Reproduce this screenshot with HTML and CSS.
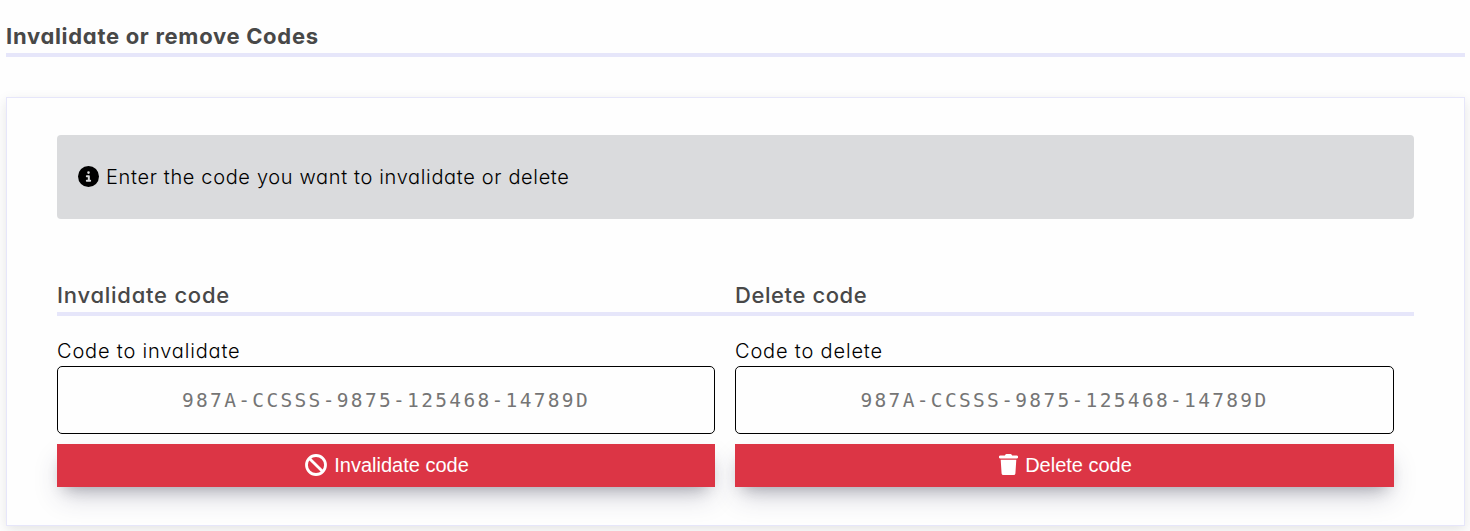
FILE: index.html
```html
<!DOCTYPE html>
<html lang="en">
<head>
<meta charset="utf-8">
<title>Invalidate or remove Codes</title>
<link rel="stylesheet" href="styles.css">
</head>
<body>
<h1 class="title">Invalidate or remove Codes</h1>
<main class="card">
  <div class="notice">
    <svg class="info" viewBox="0 0 512 512"><circle cx="256" cy="256" r="256" fill="#000"/><path fill="#dadbdd" d="M256 128a32 32 0 1 1 0 64 32 32 0 0 1 0-64zm-40 96h48c13 0 24 11 24 24v88h8c13 0 24 11 24 24s-11 24-24 24h-80c-13 0-24-11-24-24s11-24 24-24h24v-64h-24c-13 0-24-11-24-24s11-24 24-24z"/></svg>
    <span class="notice-text">Enter the code you want to invalidate or delete</span>
  </div>
  <div class="columns">
    <section class="column">
      <h2 class="subtitle"><span class="sub-a">Invalidate code</span></h2>
      <label class="label label-a" for="invalidate">Code to invalidate</label>
      <input class="code" id="invalidate" placeholder="987A-CCSSS-9875-125468-14789D">
      <button class="button"><svg class="ban" viewBox="0 0 22 22"><circle cx="11" cy="11" r="9.5"/><path d="M4.4 4.4l13.2 13.2"/></svg><span>Invalidate code</span></button>
    </section>
    <section class="column">
      <h2 class="subtitle"><span class="sub-b">Delete code</span></h2>
      <label class="label label-b" for="delete">Code to delete</label>
      <input class="code" id="delete" placeholder="987A-CCSSS-9875-125468-14789D">
      <button class="button"><svg class="trash" viewBox="0 0 19 22"><path d="M6.3.8Q6.7 0 7.5 0h4q.8 0 1.2.8l.4.7h4.6a1.3 1.3 0 0 1 0 2.9H1.3a1.3 1.3 0 0 1 0-2.9h4.6zM1.7 5.7h15.6l-.9 13.7q-.1 1.6-1.8 1.6H4.4q-1.7 0-1.8-1.6z"/></svg><span>Delete code</span></button>
    </section>
  </div>
</main>
</body>
</html>
```
FILE: styles.css
```css
* { box-sizing: border-box; }
body {
  margin: 0;
  padding: 20px 5px 0 6px;
  height: 531px;
  overflow: hidden;
  background: #fefefe;
  color: #000;
  font: 300 20px/30px Inter, "Open Sans", sans-serif;
  font-feature-settings: "cv11";
}
.title {
  margin: 0 0 40px;
  height: 37px;
  border-bottom: 4px solid #e6e6fa;
  color: #484848;
  font-size: 22px;
  font-weight: 700;
  line-height: 33px;
  letter-spacing: .7px;
}
.card {
  height: 429px;
  padding: 37px 50px 0;
  border: 1px solid #e6e6fa;
  background: #fefefe;
  box-shadow: 0 4px 12px rgba(0, 0, 0, .1);
}
.notice {
  display: flex;
  align-items: center;
  height: 84px;
  padding-left: 21px;
  border-radius: 4px;
  background: #dadbdd;
}
.notice-text { letter-spacing: .65px; }
.info { width: 21px; height: 21px; margin: -1px 7px 0 0; }
.columns {
  display: grid;
  grid-template-columns: 678px 679px;
  margin-top: 60px;
}
.column { display: flex; flex-direction: column; }
.subtitle {
  margin: 0 0 20px;
  height: 37px;
  border-bottom: 4px solid #e6e6fa;
  color: #484848;
  font-size: 22px;
  font-weight: 500;
  line-height: 32px;
}
.sub-a { letter-spacing: .76px; }
.sub-b { letter-spacing: .58px; }
.label { height: 30px; }
.label-a { letter-spacing: .82px; }
.label-b { letter-spacing: .83px; }
.code {
  width: calc(100% - 20px);
  height: 68px;
  padding: 0 20px;
  border: 1px solid #000;
  border-radius: 5px;
  background: transparent;
  font: 19.5px "DejaVu Sans Mono", monospace;
  letter-spacing: 2.33px;
  text-align: center;
}
.code::placeholder { color: #757575; opacity: 1; }
.button {
  display: flex;
  align-items: center;
  justify-content: center;
  gap: 7px;
  width: calc(100% - 20px);
  height: 43px;
  margin-top: 10px;
  padding: 0 0 0 2px;
  border: 0;
  background: #dc3545;
  color: #fff;
  font: 20px "Liberation Sans", Arial, sans-serif;
  box-shadow: rgba(50, 50, 93, .25) 0 13px 27px -5px, rgba(0, 0, 0, .3) 0 8px 16px -8px;
}
.ban { width: 22px; height: 22px; margin-top: -1px; fill: none; stroke: #fff; stroke-width: 2.8; }
.trash { width: 19px; height: 22px; margin-top: -1px; fill: #fff; }
```
